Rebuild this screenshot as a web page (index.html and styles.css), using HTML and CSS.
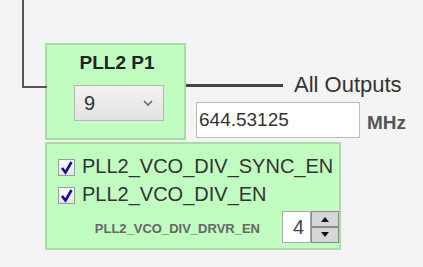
FILE: index.html
```
<!DOCTYPE html>
<html lang="en">
<head>
  <meta charset="UTF-8">
  <title>PLL2 P1</title>
  <link rel="stylesheet" href="styles.css">
</head>
<body>
<div class="canvas">
  <div class="wire-in"></div>

  <div class="top-row">
    <div class="block p1">
      <div class="block-title">PLL2 P1</div>
      <div class="select">
        <span class="select-val">9</span>
        <svg class="chev" width="10" height="6" viewBox="0 0 10 6"><path d="M1 1 L5 5 L9 1" fill="none" stroke="#666" stroke-width="1.6"/></svg>
      </div>
    </div>

    <div class="out">
      <div class="out-head">
        <span class="wire-out"></span>
        <span class="out-label">All Outputs</span>
      </div>
      <div class="freq">
        <input type="text" class="freq-input" value="644.53125">
        <span class="unit">MHz</span>
      </div>
    </div>
  </div>

  <div class="block opts">
    <div class="check-row">
      <span class="check"><svg width="15" height="15" viewBox="0 0 15 15"><path d="M3 8 L6.5 12.5 L12.5 2" fill="none" stroke="#0d0d96" stroke-width="2.6"/></svg></span>
      <span class="check-label">PLL2_VCO_DIV_SYNC_EN</span>
    </div>
    <div class="check-row">
      <span class="check"><svg width="15" height="15" viewBox="0 0 15 15"><path d="M3 8 L6.5 12.5 L12.5 2" fill="none" stroke="#0d0d96" stroke-width="2.6"/></svg></span>
      <span class="check-label">PLL2_VCO_DIV_EN</span>
    </div>
    <div class="spin-row">
      <span class="small-label">PLL2_VCO_DIV_DRVR_EN</span>
      <div class="spin">
        <input type="text" class="spin-input" value="4">
        <div class="spin-btns">
          <span class="spin-btn"><svg width="10" height="6" viewBox="0 0 10 6"><path d="M1 6 L5 1 L9 6 Z" fill="#111"/></svg></span>
          <span class="spin-btn"><svg width="10" height="6" viewBox="0 0 10 6"><path d="M1 0 L5 5 L9 0 Z" fill="#111"/></svg></span>
        </div>
      </div>
    </div>
  </div>
</div>
</body>
</html>
```
FILE: styles.css
```
body {
  margin: 0;
  background-color: #f4f4f4;
  font-family: "Liberation Sans", Arial, sans-serif;
  color: #333;
}
.canvas {
  position: relative;
  width: 423px;
  height: 267px;
  padding: 43px 0 0 45px;
  box-sizing: border-box;
}
.wire-in {
  position: absolute;
  left: 22px;
  top: 0;
  width: 23px;
  height: 86px;
  border-left: 2px solid #555;
  border-bottom: 2px solid #555;
}
.top-row {
  display: flex;
  align-items: flex-start;
}
.block {
  background-color: #c1fdc1;
  border: 2px solid #a9dba9;
  box-sizing: border-box;
}
.p1 {
  width: 141px;
  height: 97px;
  padding-top: 7px;
}
.block-title {
  font-size: 19px;
  font-weight: bold;
  line-height: 22px;
  text-align: center;
  color: #222;
  padding-left: 3px;
}
.select {
  display: flex;
  align-items: center;
  justify-content: space-between;
  width: 90px;
  height: 36px;
  margin: 11px 0 0 27px;
  padding: 0 10px 0 9px;
  box-sizing: border-box;
  border: 1px solid #b5b5b5;
  background: linear-gradient(#f2f2f2, #e3e3e3);
}
.select-val {
  font-size: 20px;
  color: #333;
}
.out {
  display: flex;
  flex-direction: column;
}
.out-head {
  display: flex;
  align-items: center;
  height: 24px;
  margin-top: 30px;
}
.wire-out {
  width: 97px;
  height: 3px;
  background-color: #444;
}
.out-label {
  margin-left: 11px;
  font-size: 22px;
  color: #333;
}
.freq {
  display: flex;
  align-items: center;
  margin: 5px 0 0 10px;
}
.freq-input {
  width: 164px;
  height: 36px;
  box-sizing: border-box;
  border: 1px solid #bbb;
  background: white;
  padding: 0 2px;
  font-family: "Liberation Sans", Arial, sans-serif;
  font-size: 19px;
  color: #333;
}
.unit {
  margin-left: 7px;
  margin-top: 5px;
  font-size: 19px;
  font-weight: bold;
  color: #555;
}
.opts {
  width: 296px;
  height: 108px;
  margin-top: 2px;
  padding: 9px 0 5px 11px;
}
.check-row {
  display: flex;
  align-items: center;
  height: 28px;
}
.check {
  display: flex;
  align-items: center;
  justify-content: center;
  width: 17px;
  height: 17px;
  box-sizing: border-box;
  border: 1px solid #9a9a9a;
  background: linear-gradient(#fdfdfd, #e4e4e4);
}
.check-label {
  margin-left: 7px;
  font-size: 20px;
  color: #333;
  margin-top: -2px;
}
.spin-row {
  display: flex;
  align-items: center;
  justify-content: flex-end;
  gap: 22px;
  margin-top: 2px;
}
.small-label {
  font-size: 13px;
  font-weight: bold;
  color: #666;
  margin-top: 2px;
}
.spin {
  display: flex;
  height: 32px;
}
.spin-input {
  width: 29px;
  height: 32px;
  box-sizing: border-box;
  border: 1px solid #aaa;
  background: white;
  padding: 0 6px 0 0;
  text-align: right;
  font-family: "Liberation Sans", Arial, sans-serif;
  font-size: 20px;
  color: #444;
}
.spin-btns {
  display: flex;
  flex-direction: column;
}
.spin-btn {
  display: flex;
  align-items: center;
  justify-content: center;
  width: 28px;
  height: 16px;
  box-sizing: border-box;
  border: 1px solid #8a8a8a;
  background-color: #d6d6d6;
}
```
